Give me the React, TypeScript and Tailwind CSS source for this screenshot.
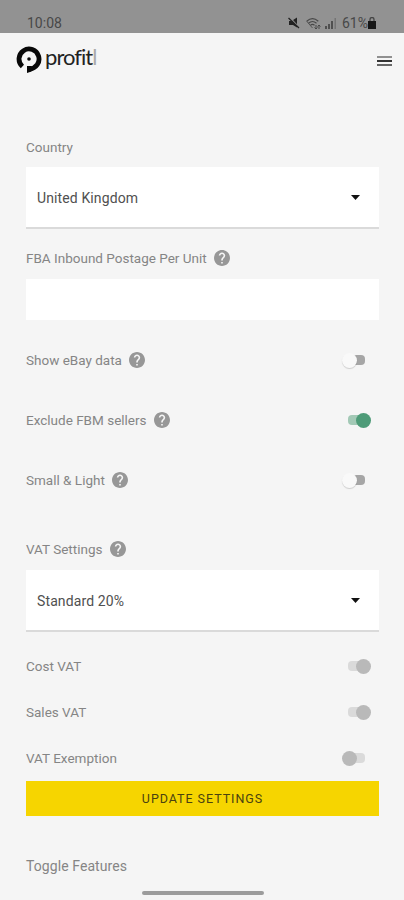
import React from 'react';
import clsx from 'clsx';

type ToggleState = 'off' | 'on' | 'disabledOn' | 'disabledOff';

const trackStyles: Record<ToggleState, string> = {
  off: 'ml-1 bg-[#a6a6a6]',
  on: 'ml-1.5 bg-[#a3c9b6]',
  disabledOn: 'ml-1.5 bg-[#dadada]',
  disabledOff: 'ml-1 bg-[#dadada]',
};

const thumbStyles: Record<ToggleState, string> = {
  off: 'left-0 bg-[#f9f9f9] shadow-[0_1px_1px_rgba(0,0,0,0.16)]',
  on: 'right-0 bg-[#4e9b78]',
  disabledOn: 'right-0 bg-[#b9b9b9]',
  disabledOff: 'left-0 bg-[#b9b9b9]',
};

function Toggle({ state }: { state: ToggleState }) {
  return (
    <button type="button" className="relative mr-[8.500px] flex h-[15px] w-[29px] items-center">
      <span className={clsx('h-[10px] w-[19px] rounded-[4px]', trackStyles[state])} />
      <span className={clsx('absolute top-0 h-[15px] w-[15px] rounded-full', thumbStyles[state])} />
    </button>
  );
}

function HelpIcon() {
  return (
    <svg viewBox="2 2 20 20" className="h-4 w-4" fill="#979797">
      <path d="M12 2C6.48 2 2 6.48 2 12s4.48 10 10 10 10-4.48 10-10S17.52 2 12 2zm1 17h-2v-2h2v2zm2.07-7.75l-.9.92C13.45 12.9 13 13.5 13 15h-2v-.5c0-1.1.45-2.1 1.17-2.83l1.24-1.26c.37-.36.59-.86.59-1.41 0-1.1-.9-2-2-2s-2 .9-2 2H8c0-2.21 1.79-4 4-4s4 1.79 4 4c0 .88-.36 1.68-.93 2.25z" />
    </svg>
  );
}

function Label({ text, help }: { text: string; help?: boolean }) {
  return (
    <div className="flex h-5 items-center gap-[7px] text-[13.5px]">
      <span className="whitespace-nowrap">{text}</span>
      {help && <HelpIcon />}
    </div>
  );
}

function SettingRow({ text, help, state }: { text: string; help?: boolean; state: ToggleState }) {
  return (
    <div className="flex h-5 items-center justify-between">
      <Label text={text} help={help} />
      <Toggle state={state} />
    </div>
  );
}

function SelectBox({ value }: { value: string }) {
  return (
    <div className="flex h-[62px] items-center justify-between border-b-2 border-[#dadada] bg-white pt-px pr-[19px] pl-[11px] text-[#505050]">
      <span className="tracking-[0.12px]">{value}</span>
      <svg viewBox="0 0 9 5" className="h-[5px] w-[9px]">
        <path d="M0 0h9L4.500 5z" fill="#111" />
      </svg>
    </div>
  );
}

function StatusBar() {
  return (
    <div className="flex h-[33px] items-end justify-between bg-[#929292] pr-[26px] pl-[27px] text-[14px] leading-[20px] text-[#484848]">
      <span>10:08</span>
      <div className="flex h-5 items-center">
        <svg viewBox="0 0 12 12" className="mr-[6px] h-3 w-3">
          <path d="M1 4h2.500L9 .5v10L5 8H1z" fill="#222" />
          <path d="M1.500 0l10 11" stroke="#929292" strokeWidth="1.200" />
          <path d="M.5 1l10.500 10" stroke="#222" strokeWidth="1.300" />
        </svg>
        <svg viewBox="0 0 15 13" className="mr-1 h-[13px] w-[15px]" fill="none" stroke="#484848">
          <path d="M.7 4.200Q6.500-1 12.300 4.200M2.500 6.200Q6.500 2.800 10.500 6.200M4.500 8.300Q6.500 6.600 8.500 8.300" strokeWidth="1.200" />
          <path d="M.7 4.200L6.500 11" strokeWidth=".8" />
          <path d="M10 8v4M8.500 10.500L10 12l1.500-1.500M13 12V8M11.500 9.500L13 8l1.500 1.500" strokeWidth="1" />
        </svg>
        <svg viewBox="0 0 12 11" className="mr-[5px] h-[11px] w-3" fill="#505050">
          <path d="M0 8h2v3H0zM3 6h2v5H3zM6 3h2v8H6z" />
          <path d="M9.500 0h1.500v11H9.500z" fill="#757575" />
        </svg>
        <span>61%</span>
        <svg viewBox="0 0 8 12" className="mr-[2px] h-3 w-2">
          <path d="M2 4V2.500a2 2 0 014 0V4" fill="none" stroke="#444" strokeWidth="1.300" />
          <path d="M0 4h8v8H0z" fill="#161616" />
        </svg>
      </div>
    </div>
  );
}

function Header() {
  return (
    <header className="flex h-[53px] items-center justify-between pr-3 pl-4">
      <div className="flex items-center gap-[3px]">
        <svg viewBox="0 0 26 28" className="mt-px h-7 w-[26px]">
          <path d="M6.400 20.500A10 10 0 1113.500 23" fill="none" stroke="#080808" strokeWidth="4.800" />
          <path d="M11 20v7l4.500-1.500V20z" fill="#080808" />
          <circle cx="13" cy="13" r="1.800" fill="#080808" />
        </svg>
        <span className="mb-[5px] text-[22px] leading-7 tracking-[-0.95px] text-[#222] font-[Lato,sans-serif]">
          profit<span className="text-[#aaa]">l</span>
        </span>
      </div>
      <button type="button" className="mt-[2px] flex w-[15px] flex-col gap-[2px]">
        <span className="h-[2px] bg-[#909090]" />
        <span className="h-[2px] bg-[#333]" />
        <span className="h-[2px] bg-[#666]" />
      </button>
    </header>
  );
}

export default function App() {
  return (
    <div className="flex h-[900px] w-full flex-col overflow-hidden bg-[#f5f5f5] font-[Roboto,sans-serif] text-[14px] leading-5 text-[#858585]">
      <StatusBar />
      <Header />

      <main className="flex flex-col pt-[51px] pr-[25px] pl-[26px]">
        <Label text="Country" />
        <div className="mt-[10px]">
          <SelectBox value="United Kingdom" />
        </div>

        <div className="mt-[19px]">
          <Label text="FBA Inbound Postage Per Unit" help />
        </div>
        <input type="text" className="mt-[11px] h-[41px] bg-white outline-none" />

        <div className="mt-[30px] flex flex-col gap-10">
          <SettingRow text="Show eBay data" help state="off" />
          <SettingRow text="Exclude FBM sellers" help state="on" />
          <SettingRow text="Small & Light" help state="off" />
        </div>

        <div className="mt-[49px]">
          <Label text="VAT Settings" help />
        </div>
        <div className="mt-[11px]">
          <SelectBox value="Standard 20%" />
        </div>

        <div className="mt-[24px] flex flex-col gap-[26px]">
          <SettingRow text="Cost VAT" state="disabledOn" />
          <SettingRow text="Sales VAT" state="disabledOn" />
          <SettingRow text="VAT Exemption" state="disabledOff" />
        </div>

        <button type="button" className="mt-[13px] h-[35px] bg-[#f6d500] pt-px text-[12.5px] tracking-[0.95px] text-[#4a4210]">
          UPDATE SETTINGS
        </button>

        <span className="mt-[40px] tracking-[0.08px]">Toggle Features</span>
      </main>

      <div className="mt-auto mb-[5px] ml-[142px] h-1 w-[122px] rounded-full bg-[#9c9c9c]" />
    </div>
  );
}
